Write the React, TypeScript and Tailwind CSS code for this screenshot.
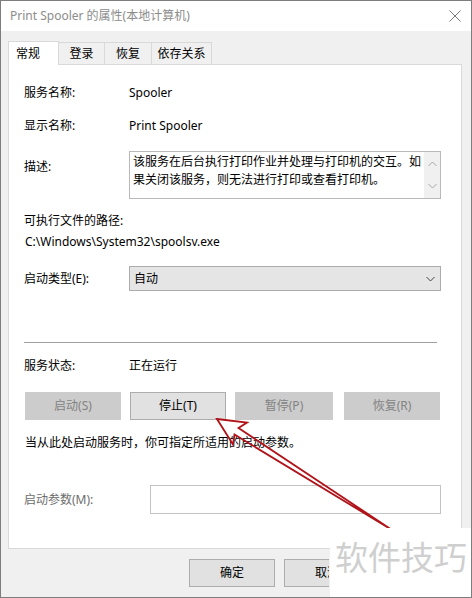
import React from 'react';

const font = { fontFamily: '"Noto Sans", "Noto Sans CJK SC", sans-serif' };

function Row({ label, children, className = '' }: { label: string; children: React.ReactNode; className?: string }) {
  return (
    <div className={`flex items-center h-[20px] ${className}`}>
      <div className="w-[105px] shrink-0">{label}</div>
      <div>{children}</div>
    </div>
  );
}

function Btn({ label, disabled, wide }: { label: string; disabled?: boolean; wide?: boolean }) {
  return (
    <div
      className={`${wide ? 'w-[98px]' : 'w-[96px]'} h-[28px] flex items-center justify-center border ${
        disabled ? 'bg-[#cccccc] border-[#cccccc] text-[#838383]' : 'bg-[#e1e1e1] border-[#adadad] text-black'
      }`}
    >
      {label}
    </div>
  );
}

function Chevron({ up, color = '#444' }: { up?: boolean; color?: string }) {
  return (
    <svg width="9" height="6" viewBox="0 0 9 6">
      <path d={up ? 'M0.5 5 L4.5 1 L8.5 5' : 'M0.5 1 L4.5 5 L8.5 1'} fill="none" stroke={color} strokeWidth="1" />
    </svg>
  );
}

export default function App() {
  return (
    <div
      className="relative w-[472px] h-[598px] overflow-hidden bg-[#f0f0f0] border border-[#7d7d7d] text-[12px] text-black flex flex-col"
      style={font}
    >
      {/* title bar */}
      <div className="h-[30px] bg-white flex items-center justify-between pl-[9px] pr-[10px] shrink-0">
        <span className="text-[#8c8c8c]">Print Spooler 的属性(本地计算机)</span>
        <svg width="12" height="12" viewBox="0 0 12 12">
          <path d="M0.5 0.5 L11.5 11.5 M11.5 0.5 L0.5 11.5" stroke="#7a7a7a" strokeWidth="1" />
        </svg>
      </div>

      {/* tabs */}
      <div className="flex items-end pl-[7px] pt-[9px] shrink-0">
        <div className="w-[51px] h-[24px] bg-white border border-b-0 border-[#d9d9d9] pl-[7px] flex items-center relative top-[1px] z-10">
          常规
        </div>
        <div className="w-[46px] h-[22px] border border-l-0 border-b-0 border-[#d9d9d9] flex items-center justify-center">登录</div>
        <div className="w-[47px] h-[22px] border border-l-0 border-b-0 border-[#d9d9d9] flex items-center justify-center">恢复</div>
        <div className="w-[60px] h-[22px] border border-l-0 border-b-0 border-[#d9d9d9] flex items-center justify-center">依存关系</div>
      </div>

      {/* panel */}
      <div className="ml-[7px] w-[454px] h-[485px] bg-white border border-[#d9d9d9] pl-[15px] pr-[20px] flex flex-col shrink-0">
        <Row label="服务名称:" className="mt-[18px]">Spooler</Row>
        <Row label="显示名称:" className="mt-[13px]">Print Spooler</Row>

        <div className="flex mt-[15px]">
          <div className="w-[105px] shrink-0 pt-[7px]">描述:</div>
          <div className="w-[312px] h-[48px] border border-[#b9b9b9] flex">
            <div className="flex-1 pl-[3px] pt-[1px] leading-[18px]">
              该服务在后台执行打印作业并处理与打印机的交互。如果关闭该服务，则无法进行打印或查看打印机。
            </div>
            <div className="w-[16px] bg-[#f0f0f0] flex flex-col items-center justify-between py-[9px]">
              <Chevron up color="#a6a6a6" />
              <Chevron color="#a6a6a6" />
            </div>
          </div>
        </div>

        <div className="mt-[14px] h-[16px] flex items-center">可执行文件的路径:</div>
        <div className="mt-[5px] h-[16px] flex items-center pl-[1px]">C:\Windows\System32\spoolsv.exe</div>

        <div className="flex items-center mt-[16px]">
          <div className="w-[105px] shrink-0">启动类型(E):</div>
          <div className="w-[312px] h-[25px] bg-[#e5e5e5] border border-[#acacac] flex items-center justify-between pl-[4px] pr-[5px]">
            <span>自动</span>
            <Chevron />
          </div>
        </div>

        <div className="mt-[51px] h-px bg-[#a0a0a0] mr-[4px]" />

        <Row label="服务状态:" className="mt-[13px]">正在运行</Row>

        <div className="flex mt-[16px] gap-[9px] pl-[1px]">
          <Btn label="启动(S)" disabled />
          <Btn label="停止(T)" />
          <Btn label="暂停(P)" disabled wide />
          <div className="ml-[2px]">
            <Btn label="恢复(R)" disabled />
          </div>
        </div>

        <div className="mt-[15px] h-[16px] flex items-center pl-[1px]">当从此处启动服务时，你可指定所适用的启动参数。</div>

        <div className="flex items-center mt-[34px]">
          <div className="w-[126px] shrink-0 text-[#6d6d6d]">启动参数(M):</div>
          <div className="w-[291px] h-[29px] border border-[#c3c3c3] bg-white" />
        </div>
      </div>

      {/* bottom buttons, the rest hidden under the watermark */}
      <div className="w-[328px] overflow-hidden flex gap-[9px] pl-[188px] pt-[10px]">
        <div className="w-[86px] h-[28px] shrink-0 bg-[#e1e1e1] border border-[#adadad] flex items-center justify-center">确定</div>
        <div className="w-[86px] h-[28px] shrink-0 bg-[#e1e1e1] border border-[#adadad] flex items-center justify-center">取消</div>
      </div>

      {/* annotation arrow */}
      <svg className="absolute left-[-1px] top-[-1px] pointer-events-none" width="472" height="598" viewBox="0 0 472 598">
        <path
          d="M217 419 L247 422.5 L238.5 428 L392 530 L234.5 434.5 L233 444.5 Z"
          fill="none"
          stroke="#b0141a"
          strokeWidth="1.8"
          strokeLinejoin="miter"
        />
      </svg>

      {/* watermark */}
      <div className="absolute left-[329px] top-[527px] w-[150px] h-[80px] bg-white pl-[5px] pt-[8px]">
        <span className="text-[33px] leading-[40px] text-[#cfcfcf]" style={{ fontFamily: '"Noto Sans CJK SC", sans-serif' }}>
          软件技巧
        </span>
      </div>
    </div>
  );
}
